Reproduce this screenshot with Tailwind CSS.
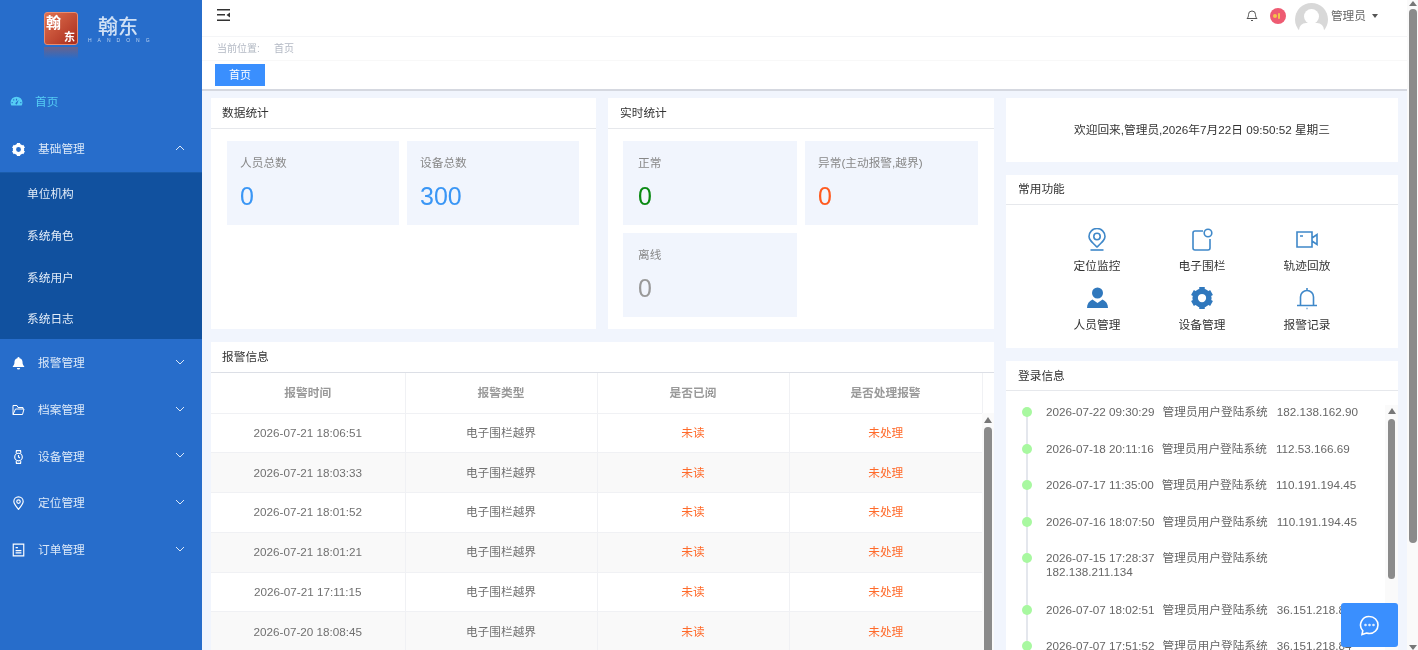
<!DOCTYPE html>
<html lang="zh">
<head>
<meta charset="utf-8">
<script src="https://cdn.jsdelivr.net/npm/@tailwindcss/browser@4"></script>
</head>
<body class="m-0">
<div class="flex w-[1418px] h-[650px] overflow-hidden relative bg-[#f1f5fd] text-[11.7px] leading-[14px] blur-[0.3px] font-['Liberation_Sans','Noto_Sans_CJK_SC',sans-serif]">
  <!-- sidebar -->
  <aside class="w-[202px] shrink-0 bg-[#276dcb] text-[#dbe8f8]">
    <div class="h-[78px] relative">
      <div class="absolute left-[44px] top-[12px] w-[34px] h-[33px] rounded-[3px] overflow-hidden border border-[#e98d70] bg-gradient-to-br from-[#e0704f] to-[#a92a1c] text-white font-bold font-['Noto_Sans_CJK_SC',sans-serif]">
        <span class="absolute left-[1px] top-[1px] text-[15px] leading-[16px]">翰</span>
        <span class="absolute left-[19px] top-[17px] text-[11px] leading-[12px]">东</span>
      </div>
      <div class="absolute left-[44px] top-[47px] w-[34px] h-[12px] bg-gradient-to-b from-[#a9584f]/50 to-transparent"></div>
      <div class="absolute left-[98px] top-[16px] text-[20px] leading-[20px] font-medium text-[#cfe0f5] font-['Noto_Sans_CJK_SC',sans-serif]">翰东</div>
      <div class="absolute left-[88px] top-[37px] text-[5px] leading-[6px] tracking-[6px] text-[#bcd3f0]">HANDONG</div>
    </div>
    <div class="h-[47px] flex items-center pl-[10px] pt-[1px] text-[#55cdf5] gap-[12px]">
      <svg class="w-[13px] h-[13px] -mt-[1px]" viewBox="0 0 24 24" fill="currentColor"><path d="M12 3A11 11 0 0 0 1 14c0 2 .5 3.800 1.500 5.500h19c1-1.700 1.500-3.500 1.500-5.500A11 11 0 0 0 12 3zm-1 4h2v3h-2zM5 15H3v-2h2zm2-4.500L5.500 9 7 7.500 8.500 9zm5 7a2 2 0 0 1-1-3.700L16 9l-2.700 7.300A2 2 0 0 1 12 17.500zm9-2.500h-2v-2h2z"/></svg>
      <span>首页</span>
    </div>
    <div class="h-[47px] flex items-center pl-[12px] pr-[17px] pt-[1px]">
      <svg class="w-[13px] h-[13px] text-white" viewBox="0 0 24 24" fill="currentColor"><circle cx="12" cy="12" r="7.500" fill="none" stroke="currentColor" stroke-width="6"/><rect x="9" y="0" width="6" height="5"/><rect x="9" y="19" width="6" height="5"/><rect x="9" y="0" width="6" height="5" transform="rotate(60 12 12)"/><rect x="9" y="19" width="6" height="5" transform="rotate(60 12 12)"/><rect x="9" y="0" width="6" height="5" transform="rotate(120 12 12)"/><rect x="9" y="19" width="6" height="5" transform="rotate(120 12 12)"/></svg>
      <span class="ml-[13px] flex-1">基础管理</span>
      <svg class="w-[10px] h-[6px] -mt-[3px]" viewBox="0 0 10 6" fill="none" stroke="currentColor"><path d="M1 5l4-4 4 4"/></svg>
    </div>
    <div class="bg-[#11519f] h-[167px] border-t border-[#1a5cab] text-[#e2ecf8]">
      <div class="h-[42px] flex items-center pl-[27px]">单位机构</div>
      <div class="h-[42px] flex items-center pl-[27px]">系统角色</div>
      <div class="h-[42px] flex items-center pl-[27px]">系统用户</div>
      <div class="h-[40px] flex items-center pl-[27px]">系统日志</div>
    </div>
    <div class="h-[47px] flex items-center pl-[12px] pr-[17px] pt-[1px]">
      <svg class="w-[13px] h-[14px] text-white" viewBox="0 0 24 24" fill="currentColor"><path d="M12 1a2 2 0 0 1 2 2c4 1 5.500 4 5.500 8 0 3 1 5 3 7v1.500h-21V18c2-2 3-4 3-7 0-4 1.500-7 5.500-8a2 2 0 0 1 2-2zM9 21h6a3 3 0 0 1-6 0z"/></svg>
      <span class="ml-[13px] flex-1">报警管理</span>
      <svg class="w-[10px] h-[6px] -mt-[3px]" viewBox="0 0 10 6" fill="none" stroke="currentColor"><path d="M1 1l4 4 4-4"/></svg>
    </div>
    <div class="h-[47px] flex items-center pl-[12px] pr-[17px] pt-[1px]">
      <svg class="w-[13px] h-[12px] text-white" viewBox="0 0 26 22" fill="none" stroke="currentColor" stroke-width="2"><path d="M2 20V2h8l2 4h10v3M2 20h19l3-11H7z" stroke-linejoin="round"/></svg>
      <span class="ml-[13px] flex-1">档案管理</span>
      <svg class="w-[10px] h-[6px] -mt-[3px]" viewBox="0 0 10 6" fill="none" stroke="currentColor"><path d="M1 1l4 4 4-4"/></svg>
    </div>
    <div class="h-[46px] flex items-center pl-[12px] pr-[17px] pt-[1px]">
      <svg class="w-[13px] h-[14px] text-white" viewBox="0 0 20 24" fill="none" stroke="currentColor" stroke-width="2"><circle cx="10" cy="12" r="6.500"/><path d="M10 8.500V12l2.500 1.500M6 5l.5-4h7l.5 4M6 19l.5 4h7l.5-4"/></svg>
      <span class="ml-[13px] flex-1">设备管理</span>
      <svg class="w-[10px] h-[6px] -mt-[3px]" viewBox="0 0 10 6" fill="none" stroke="currentColor"><path d="M1 1l4 4 4-4"/></svg>
    </div>
    <div class="h-[47px] flex items-center pl-[12px] pr-[17px] pt-[1px]">
      <svg class="w-[13px] h-[14px] text-white" viewBox="0 0 20 24" fill="none" stroke="currentColor" stroke-width="2"><path d="M10 23C5 17 2 13.500 2 9.500a8 8 0 0 1 16 0C18 13.500 15 17 10 23z"/><circle cx="10" cy="9.500" r="3"/></svg>
      <span class="ml-[13px] flex-1">定位管理</span>
      <svg class="w-[10px] h-[6px] -mt-[3px]" viewBox="0 0 10 6" fill="none" stroke="currentColor"><path d="M1 1l4 4 4-4"/></svg>
    </div>
    <div class="h-[47px] flex items-center pl-[12px] pr-[17px] pt-[1px]">
      <svg class="w-[13px] h-[14px] text-white" viewBox="0 0 22 24" fill="none" stroke="currentColor" stroke-width="2"><path d="M2 2h18v20H2zM6 8h4M6 13h10M6 17h10"/></svg>
      <span class="ml-[13px] flex-1">订单管理</span>
      <svg class="w-[10px] h-[6px] -mt-[3px]" viewBox="0 0 10 6" fill="none" stroke="currentColor"><path d="M1 1l4 4 4-4"/></svg>
    </div>
  </aside>

  <!-- main -->
  <main class="w-[1205px] shrink-0 h-[650px] overflow-hidden">
    <header class="h-[37px] bg-white flex items-center pl-[15px] pr-[29px] pb-[5px] border-b border-[#f4f5f7]">
      <svg class="w-[13px] h-[12px] -mt-[1px]" viewBox="0 0 13 12" fill="#333"><path d="M0 0h13v1.500H0zM0 5h8v1.500H0zM0 10.500h13V12H0zM13 3.500v5L9.500 6z"/></svg>
      <div class="flex-1"></div>
      <svg class="w-[12px] h-[12px] -mt-[1px] text-[#555]" viewBox="0 0 12 12" fill="none" stroke="currentColor"><path d="M1 9.500c1-1 1.500-2 1.500-4a3.500 3.500 0 0 1 7 0c0 2 .5 3 1.500 4zM5 11.500h2"/></svg>
      <div class="ml-[12px] w-[16px] h-[16px] rounded-full bg-[#ee5b72] flex items-center pl-[3px] gap-[1px]"><span class="w-[4px] h-[4px] rounded-full bg-[#f4c54c]"></span><span class="w-[2px] h-[6px] rounded-full bg-[#f4c54c]"></span></div>
      <div class="ml-[9px] w-[33px] h-[28px] -mb-[3px] relative overflow-hidden shrink-0">
        <div class="absolute inset-x-0 top-0 h-[33px] rounded-full bg-[#d8d8d8]"></div>
        <div class="absolute left-[9px] top-[6px] w-[15px] h-[15px] rounded-full bg-white"></div>
        <div class="absolute left-[4px] top-[20px] w-[25px] h-[14px] rounded-full bg-white"></div>
      </div>
      <span class="ml-[3px] text-[#666]">管理员</span>
      <span class="ml-[6px] w-0 h-0 border-x-[3.500px] border-x-transparent border-t-[4px] border-t-[#555]"></span>
    </header>
    <div class="h-[24px] bg-white flex items-center pl-[15px] text-[10px] text-[#b3b9c4] border-b border-[#f8f8f8]">
      <span class="w-[44px]">当前位置:</span><span class="ml-[13px]">首页</span>
    </div>
    <div class="h-[30px] bg-white border-b-2 border-[#d5d8e0] pl-[13px] pt-[3px]">
      <div class="w-[50px] h-[22px] bg-[#3a8ffe] text-white flex items-center justify-center text-[11px]">首页</div>
    </div>
    <div class="flex gap-[12px] pl-[9px] pt-[7px]">
      <!-- left column -->
      <div class="w-[783px] shrink-0 flex flex-col gap-[13px]">
        <div class="flex gap-[12px]">
          <section class="w-[385px] h-[231px] bg-white">
            <h3 class="h-[31px] flex items-center pl-[11px] border-b border-[#e6e8ec] text-[#333]">数据统计</h3>
            <div class="grid grid-cols-[172px_172px] gap-[8px] pt-[12px] pl-[16px]">
              <div class="h-[84px] bg-[#f1f5fd] pl-[13px] pt-[15px] text-[#888]">人员总数<div class="mt-[11px] text-[25px] leading-[30px] text-[#3a96f5]">0</div></div>
              <div class="h-[84px] bg-[#f1f5fd] pl-[13px] pt-[15px] text-[#888]">设备总数<div class="mt-[11px] text-[25px] leading-[30px] text-[#3a96f5]">300</div></div>
            </div>
          </section>
          <section class="w-[386px] h-[231px] bg-white">
            <h3 class="h-[31px] flex items-center pl-[12px] border-b border-[#e6e8ec] text-[#333]">实时统计</h3>
            <div class="grid grid-cols-[174px_173px] gap-[8px] pt-[12px] pl-[15px]">
              <div class="h-[84px] bg-[#f1f5fd] pl-[15px] pt-[15px] text-[#888]">正常<div class="mt-[11px] text-[25px] leading-[30px] text-[#0a8a12]">0</div></div>
              <div class="h-[84px] bg-[#f1f5fd] pl-[13px] pt-[15px] text-[#888]">异常(主动报警,越界)<div class="mt-[11px] text-[25px] leading-[30px] text-[#ff5a1f]">0</div></div>
              <div class="h-[84px] bg-[#f1f5fd] pl-[15px] pt-[15px] text-[#888]">离线<div class="mt-[11px] text-[25px] leading-[30px] text-[#999]">0</div></div>
            </div>
          </section>
        </div>
        <section class="bg-white h-[320px] relative">
          <h3 class="h-[31px] flex items-center pl-[11px] border-b border-[#dcdfe6] text-[#333]">报警信息</h3>
          <table class="w-[771px] table-fixed border-collapse text-center text-[#707070]">
            <colgroup><col class="w-[194px]"><col class="w-[192px]"><col class="w-[192px]"><col class="w-[193px]"></colgroup>
            <thead class="text-[#999]">
              <tr class="h-[40px] border-b border-[#f0f1f4]"><th class="font-bold border-r border-[#f0f1f4]">报警时间</th><th class="font-bold border-r border-[#f0f1f4]">报警类型</th><th class="font-bold border-r border-[#f0f1f4]">是否已阅</th><th class="font-bold border-r border-[#f0f1f4]">是否处理报警</th></tr>
            </thead>
            <tbody>
              <tr class="h-[39.8px] border-b border-[#f0f1f4]"><td class="border-r border-[#f0f1f4]">2026-07-21 18:06:51</td><td class="border-r border-[#f0f1f4]">电子围栏越界</td><td class="border-r border-[#f0f1f4] text-[#ff6a2a]">未读</td><td class="text-[#ff6a2a]">未处理</td></tr>
              <tr class="h-[39.8px] border-b border-[#f0f1f4] bg-[#f9f9f9]"><td class="border-r border-[#f0f1f4]">2026-07-21 18:03:33</td><td class="border-r border-[#f0f1f4]">电子围栏越界</td><td class="border-r border-[#f0f1f4] text-[#ff6a2a]">未读</td><td class="text-[#ff6a2a]">未处理</td></tr>
              <tr class="h-[39.8px] border-b border-[#f0f1f4]"><td class="border-r border-[#f0f1f4]">2026-07-21 18:01:52</td><td class="border-r border-[#f0f1f4]">电子围栏越界</td><td class="border-r border-[#f0f1f4] text-[#ff6a2a]">未读</td><td class="text-[#ff6a2a]">未处理</td></tr>
              <tr class="h-[39.8px] border-b border-[#f0f1f4] bg-[#f9f9f9]"><td class="border-r border-[#f0f1f4]">2026-07-21 18:01:21</td><td class="border-r border-[#f0f1f4]">电子围栏越界</td><td class="border-r border-[#f0f1f4] text-[#ff6a2a]">未读</td><td class="text-[#ff6a2a]">未处理</td></tr>
              <tr class="h-[39.8px] border-b border-[#f0f1f4]"><td class="border-r border-[#f0f1f4]">2026-07-21 17:11:15</td><td class="border-r border-[#f0f1f4]">电子围栏越界</td><td class="border-r border-[#f0f1f4] text-[#ff6a2a]">未读</td><td class="text-[#ff6a2a]">未处理</td></tr>
              <tr class="h-[39.8px] border-b border-[#f0f1f4] bg-[#f9f9f9]"><td class="border-r border-[#f0f1f4]">2026-07-20 18:08:45</td><td class="border-r border-[#f0f1f4]">电子围栏越界</td><td class="border-r border-[#f0f1f4] text-[#ff6a2a]">未读</td><td class="text-[#ff6a2a]">未处理</td></tr>
            </tbody>
          </table>
          <div class="absolute left-[771px] top-[71px] bottom-0 w-[12px] bg-[#fafafa]">
            <div class="mx-auto mt-[4px] w-0 h-0 border-x-[4px] border-x-transparent border-b-[6px] border-b-[#777]"></div>
            <div class="mx-auto mt-[4px] w-[8px] h-[300px] rounded-[4px] bg-[#8b8b8b]"></div>
          </div>
        </section>
      </div>
      <!-- right column -->
      <div class="w-[392px] shrink-0 flex flex-col gap-[13px]">
        <section class="h-[64px] bg-white flex items-center justify-center text-[#333]">欢迎回来,管理员,2026年7月22日 09:50:52 星期三</section>
        <section class="h-[173px] bg-white">
          <h3 class="h-[30px] flex items-center pl-[12px] pb-[1px] border-b border-[#e6e8ec] text-[#333]">常用功能</h3>
          <div class="grid grid-cols-[105px_105px_105px] justify-center pt-[23px] text-[#333] text-center">
            <div class="h-[59px] flex flex-col items-center">
              <svg class="w-[20px] h-[23px] text-[#3f88c9]" viewBox="0 0 20 23" fill="none" stroke="currentColor" stroke-width="1.600"><path d="M10 19C5 14.500 2 12 2 8.500a8 8 0 0 1 16 0C18 12 15 14.500 10 19z"/><circle cx="10" cy="8.500" r="3.200"/><path d="M3.500 22h13" stroke-width="1.600"/></svg>
              <span class="mt-[8px]">定位监控</span>
            </div>
            <div class="h-[59px] flex flex-col items-center">
              <svg class="w-[21px] h-[23px] text-[#3f88c9]" viewBox="0 0 21 23" fill="none" stroke="currentColor" stroke-width="1.600"><path d="M11 3H3a2 2 0 0 0-2 2v15a2 2 0 0 0 2 2h13a2 2 0 0 0 2-2v-9"/><circle cx="16" cy="5" r="3.800"/></svg>
              <span class="mt-[8px]">电子围栏</span>
            </div>
            <div class="h-[59px] flex flex-col items-center">
              <svg class="w-[22px] h-[23px] text-[#3f88c9]" viewBox="0 0 22 23" fill="none" stroke="currentColor" stroke-width="1.600"><path d="M1 4h15v15H1zM16 10l5-3.500v10L16 13zM4 8h3"/></svg>
              <span class="mt-[8px]">轨迹回放</span>
            </div>
            <div class="h-[59px] flex flex-col items-center">
              <svg class="w-[21px] h-[21px] text-[#3078bd] mb-[2px]" viewBox="0 0 21 21" fill="currentColor"><circle cx="10.500" cy="6" r="5.500"/><path d="M0 21c0-4 2-7 5.500-8.500L10.500 16l5-3.500C19 14 21 17 21 21z"/></svg>
              <span class="mt-[8px]">人员管理</span>
            </div>
            <div class="h-[59px] flex flex-col items-center">
              <svg class="w-[22px] h-[22px] text-[#3078bd] mb-[1px]" viewBox="0 0 24 24" fill="currentColor"><circle cx="12" cy="12" r="7.500" fill="none" stroke="currentColor" stroke-width="6"/><rect x="9" y="0" width="6" height="5"/><rect x="9" y="19" width="6" height="5"/><rect x="9" y="0" width="6" height="5" transform="rotate(60 12 12)"/><rect x="9" y="19" width="6" height="5" transform="rotate(60 12 12)"/><rect x="9" y="0" width="6" height="5" transform="rotate(120 12 12)"/><rect x="9" y="19" width="6" height="5" transform="rotate(120 12 12)"/></svg>
              <span class="mt-[8px]">设备管理</span>
            </div>
            <div class="h-[59px] flex flex-col items-center">
              <svg class="w-[22px] h-[23px] text-[#3f88c9]" viewBox="0 0 22 23" fill="none" stroke="currentColor" stroke-width="1.600"><path d="M11 1v2.500M4.500 18V10a6.500 6.500 0 0 1 13 0v8M1 18.500h20M10.500 21.500h1"/></svg>
              <span class="mt-[8px]">报警记录</span>
            </div>
          </div>
        </section>
        <section class="h-[400px] bg-white relative">
          <h3 class="h-[30px] flex items-center pl-[12px] border-b border-[#e6e8ec] text-[#333]">登录信息</h3>
          <ul class="relative pt-[14px] pl-[16px] text-[#666]">
            <li class="absolute left-[20px] top-[20px] w-[2px] h-[260px] bg-[#e4e7ed]"></li>
            <li class="relative h-[37px] pl-[24px]"><span class="absolute left-0 top-[2px] w-[10px] h-[10px] rounded-full bg-[#a8f8a0]"></span>2026-07-22 09:30:29<span class="ml-[8px]">管理员用户登陆系统</span><span class="ml-[9px]">182.138.162.90</span></li>
            <li class="relative h-[36px] pl-[24px]"><span class="absolute left-0 top-[2px] w-[10px] h-[10px] rounded-full bg-[#a8f8a0]"></span>2026-07-18 20:11:16<span class="ml-[8px]">管理员用户登陆系统</span><span class="ml-[9px]">112.53.166.69</span></li>
            <li class="relative h-[37px] pl-[24px]"><span class="absolute left-0 top-[2px] w-[10px] h-[10px] rounded-full bg-[#a8f8a0]"></span>2026-07-17 11:35:00<span class="ml-[8px]">管理员用户登陆系统</span><span class="ml-[9px]">110.191.194.45</span></li>
            <li class="relative h-[36px] pl-[24px]"><span class="absolute left-0 top-[2px] w-[10px] h-[10px] rounded-full bg-[#a8f8a0]"></span>2026-07-16 18:07:50<span class="ml-[8px]">管理员用户登陆系统</span><span class="ml-[9px]">110.191.194.45</span></li>
            <li class="relative h-[52px] pl-[24px]"><span class="absolute left-0 top-[2px] w-[10px] h-[10px] rounded-full bg-[#a8f8a0]"></span>2026-07-15 17:28:37<span class="ml-[8px]">管理员用户登陆系统</span><br>182.138.211.134</li>
            <li class="relative h-[36px] pl-[24px]"><span class="absolute left-0 top-[2px] w-[10px] h-[10px] rounded-full bg-[#a8f8a0]"></span>2026-07-07 18:02:51<span class="ml-[8px]">管理员用户登陆系统</span><span class="ml-[9px]">36.151.218.84</span></li>
            <li class="relative h-[36px] pl-[24px]"><span class="absolute left-0 top-[2px] w-[10px] h-[10px] rounded-full bg-[#a8f8a0]"></span>2026-07-07 17:51:52<span class="ml-[8px]">管理员用户登陆系统</span><span class="ml-[9px]">36.151.218.84</span></li>
          </ul>
          <div class="absolute right-0 top-[44px] bottom-0 w-[13px] bg-[#fafafa]">
            <div class="mx-auto mt-[3px] w-0 h-0 border-x-[4px] border-x-transparent border-b-[6px] border-b-[#777]"></div>
            <div class="mx-auto mt-[5px] w-[7px] h-[160px] rounded-[4px] bg-[#8b8b8b]"></div>
          </div>
        </section>
      </div>
    </div>
  </main>

  <!-- page scrollbar -->
  <div class="w-[11px] shrink-0 bg-[#fafafa] flex flex-col items-center relative">
    <div class="mt-[1px] w-0 h-0 border-x-[4px] border-x-transparent border-b-[5px] border-b-[#777]"></div>
    <div class="mt-[3px] w-[8px] h-[534px] rounded-[4px] bg-[#8b8b8b]"></div>
    <div class="absolute bottom-0 w-0 h-0 border-x-[4px] border-x-transparent border-t-[5px] border-t-[#777]"></div>
  </div>

  <!-- chat button -->
  <div class="absolute left-[1341px] top-[603px] w-[57px] h-[44px] rounded-[3px] bg-[#3a8ffe] flex items-center justify-center">
    <svg class="w-[21px] h-[21px]" viewBox="0 0 21 21" fill="none" stroke="white" stroke-width="1.600"><path d="M10.500 1.500a8.500 8.500 0 0 1 0 17c-1 0-2-.200-3-.5L3 19.500l.8-3.800A8.500 8.500 0 0 1 10.500 1.500z"/><circle cx="6.500" cy="10" r=".4" fill="white"/><circle cx="10.500" cy="10" r=".4" fill="white"/><circle cx="14.500" cy="10" r=".4" fill="white"/></svg>
  </div>
</div>
</body>
</html>
